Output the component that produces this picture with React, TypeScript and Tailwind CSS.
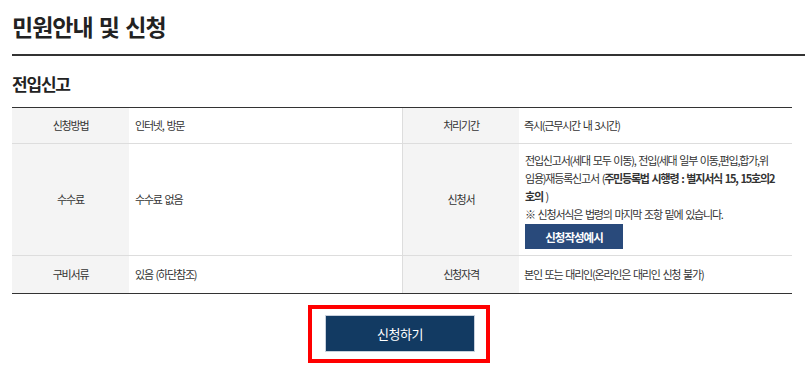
export default function App() {
  const font = { fontFamily: '"Noto Sans CJK KR", "Noto Sans", sans-serif' };

  return (
    <div className="w-[805px] h-[370px] bg-white text-[#333] overflow-hidden" style={font}>
      <div className="pl-[12px] pt-[11px]">
        <h1 className="text-[23px] leading-[30px] font-bold tracking-[-1px] [word-spacing:2px] text-[#222]">
          민원안내 및 신청
        </h1>
        <div className="mt-[13px] h-[2px] bg-[#333]" />

        <h2 className="mt-[16px] text-[17px] leading-[24px] font-bold tracking-[-1.2px] text-[#222]">
          전입신고
        </h2>

        <div className="mt-[11px] w-[780px] border-t border-b border-[#333] text-[11px] tracking-[-1.2px] [word-spacing:1.5px]">
          {/* 1행 */}
          <div className="grid grid-cols-[117px_273px_117px_273px] h-[36px] border-b border-[#ddd]">
            <div className="bg-[#f4f4f4] flex items-center justify-center">신청방법</div>
            <div className="flex items-center pl-[6px]">인터넷, 방문</div>
            <div className="bg-[#f4f4f4] border-l border-[#ddd] flex items-center justify-center">처리기간</div>
            <div className="flex items-center pl-[5px]">즉시(근무시간 내 3시간)</div>
          </div>

          {/* 2행 */}
          <div className="grid grid-cols-[117px_273px_117px_273px] h-[112px] border-b border-[#ddd]">
            <div className="bg-[#f4f4f4] flex items-center justify-center">수수료</div>
            <div className="flex items-center pl-[6px]">수수료 없음</div>
            <div className="bg-[#f4f4f4] border-l border-[#ddd] flex items-center justify-center">신청서</div>
            <div className="pl-[6px] pt-[7px] leading-[18px] whitespace-nowrap">
              <div>전입신고서(세대 모두 이동), 전입(세대 일부 이동,편입,합가,위</div>
              <div>
                임용)재등록신고서 (<b className="font-bold">주민등록법 시행령 : 별지서식 15, 15호의2</b>
              </div>
              <div>
                <b className="font-bold">호의</b> )
              </div>
              <div>※ 신청서식은 법령의 마지막 조항 밑에 있습니다.</div>
              <button className="mt-[1px] w-[98px] h-[25px] bg-[#294a7b] text-white font-bold text-[11.5px] tracking-[-1px]">
                신청작성예시
              </button>
            </div>
          </div>

          {/* 3행 */}
          <div className="grid grid-cols-[117px_273px_117px_273px] h-[37px]">
            <div className="bg-[#f4f4f4] flex items-center justify-center">구비서류</div>
            <div className="flex items-center pl-[6px]">있음 (하단참조)</div>
            <div className="bg-[#f4f4f4] border-l border-[#ddd] flex items-center justify-center">신청자격</div>
            <div className="flex items-center pl-[5px]">본인 또는 대리인(온라인은 대리인 신청 불가)</div>
          </div>
        </div>

        <div className="mt-[11px] ml-[296px] w-[182px] border-[4px] border-[#f00] pt-[6px] pb-[7px] pl-[13px]">
          <button className="w-[150px] h-[37px] bg-[#123a62] border border-[#c8d0dc] text-white text-[13px] tracking-[-0.5px]">
            신청하기
          </button>
        </div>
      </div>
    </div>
  );
}
